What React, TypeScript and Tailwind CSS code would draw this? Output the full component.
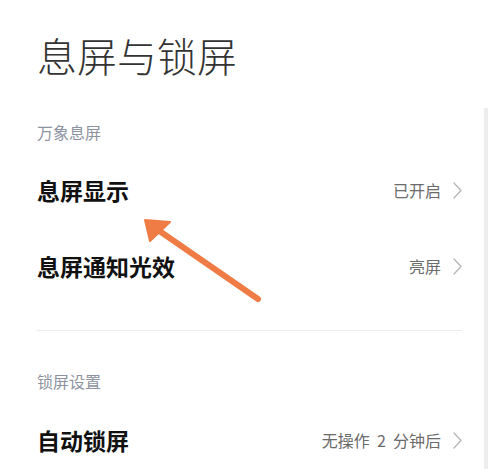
const font = { fontFamily: '"Noto Sans CJK SC", "Noto Sans", sans-serif' }

function Chevron() {
  return (
    <svg width="9" height="17" viewBox="0 0 9 17" fill="none" className="shrink-0">
      <path d="M1 1l7 7.5L1 16" stroke="#b5b5b5" strokeWidth="1.3" strokeLinecap="round" strokeLinejoin="round" />
    </svg>
  )
}

function Row({ label, value, mt }: { label: string; value: string; mt: string }) {
  return (
    <div className={`flex h-[76px] shrink-0 items-center justify-between ${mt}`}>
      <span className="text-[23px] leading-none font-bold text-[#111]">{label}</span>
      <div className="flex items-center gap-[12px]">
        <span className="text-[16px] leading-none text-[#6b6b6b] whitespace-pre">{value}</span>
        <Chevron />
      </div>
    </div>
  )
}

export default function App() {
  return (
    <div className="relative flex h-[469px] w-[500px] overflow-hidden bg-white" style={font}>
      <div className="flex flex-1 flex-col pl-[37px] pr-[22px]">
        <div className="mt-[35px] flex h-[40px] shrink-0 items-center">
          <h1 className="text-[40px] leading-none font-light text-[#333]">息屏与锁屏</h1>
        </div>

        <div className="mt-[40px] flex h-[34px] shrink-0 items-center">
          <span className="text-[16px] leading-none text-[#8d93a1]">万象息屏</span>
        </div>
        <Row label="息屏显示" value="已开启" mt="mt-[3px]" />
        <Row label="息屏通知光效" value="亮屏" mt="mt-0" />

        <div className="mt-[26px] h-px shrink-0 bg-[#ececec]" />

        <div className="mt-[33px] flex h-[34px] shrink-0 items-center">
          <span className="text-[16px] leading-none text-[#8d93a1]">锁屏设置</span>
        </div>
        <Row label="自动锁屏" value="无操作  2  分钟后" mt="mt-[4px]" />
      </div>

      <div className="mt-[108px] mr-[12px] w-[4px] bg-[#ededed]" />

      <svg className="pointer-events-none absolute left-0 top-0" width="500" height="469" viewBox="0 0 500 469">
        <line x1="258" y1="299" x2="158" y2="230" stroke="#ef7b45" strokeWidth="6" strokeLinecap="round" />
        <polygon points="145,220 170,222 150,241" fill="#ef7b45" stroke="#ef7b45" strokeWidth="2" strokeLinejoin="round" />
      </svg>
    </div>
  )
}
